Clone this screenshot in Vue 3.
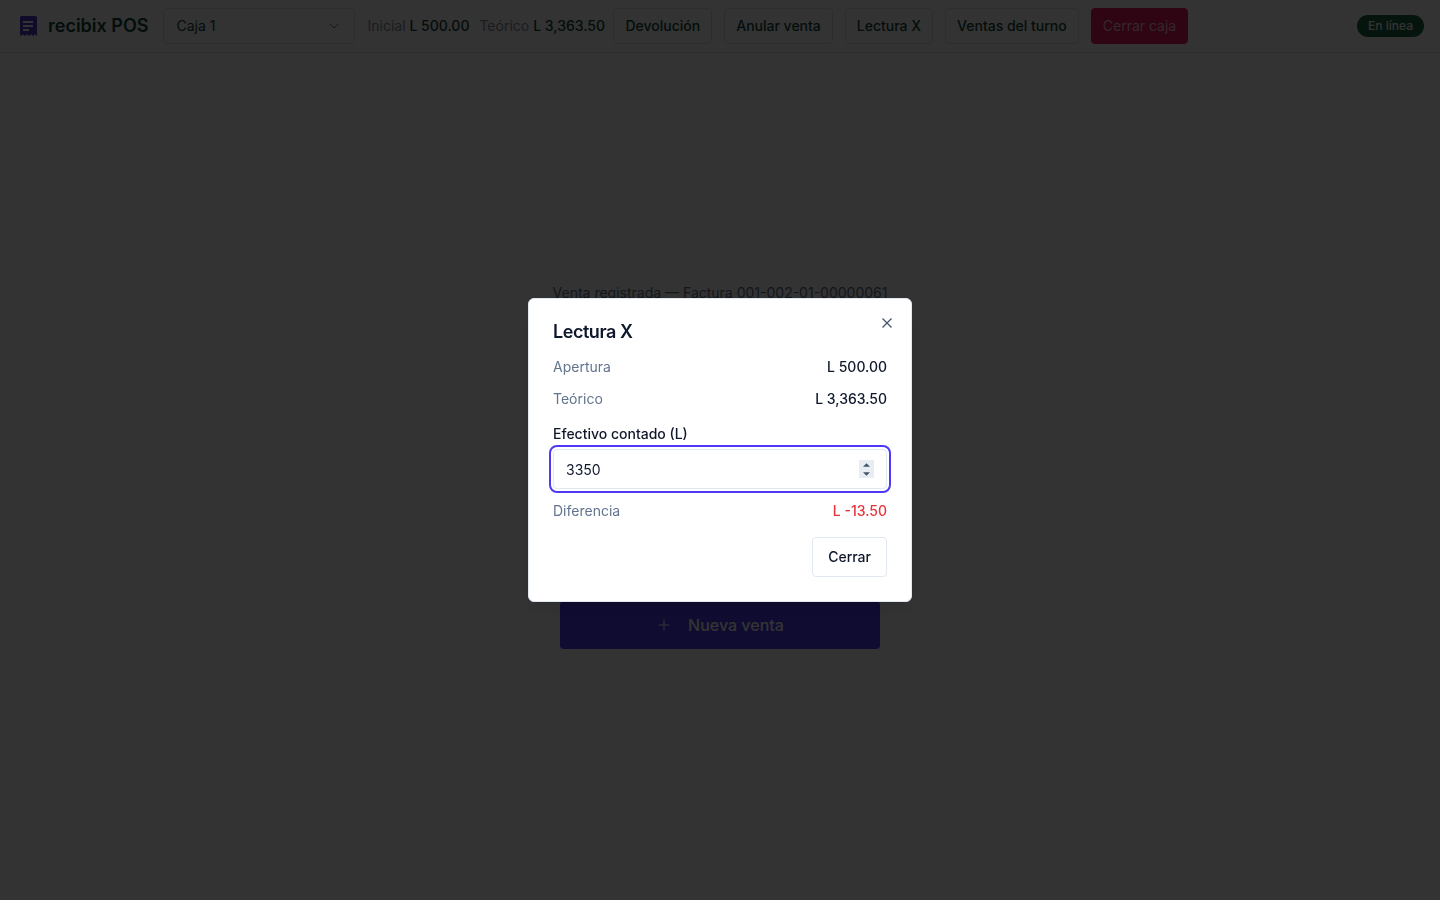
<script setup>
import { ref, computed } from 'vue'

const register = ref('Caja 1')
const counted = ref(3350)
const opening = 500
const expected = 3363.5
const actions = ['Devolución', 'Anular venta', 'Lectura X', 'Ventas del turno']

const money = (n) =>
  'L ' + n.toLocaleString('en-US', { minimumFractionDigits: 2, maximumFractionDigits: 2 })
const difference = computed(() => Number(counted.value) - expected)

const step = (by) => {
  counted.value = Number(counted.value) + by
}
</script>

<template>
  <div class="app">
    <header class="bar">
      <a class="brand" href="#">
        <svg class="logo" viewBox="0 0 24 24" aria-hidden="true">
          <path d="M4 3.5Q4 2 5.500 2h14Q21 2 21 3.500V22l-2-1.800-2 1.800-2-1.800-2 1.800-2-1.800L9 22l-2-1.800L5.500 22 4 20.500z" fill="#4f39c6" />
          <path d="M7 8h10M7 12h10M7 16h6" stroke="#fff" stroke-width="2" />
        </svg>
        <span>recibix POS</span>
      </a>
      <div class="picker">
        <select v-model="register" aria-label="Caja">
          <option>Caja 1</option>
        </select>
        <svg class="chevron" viewBox="0 0 16 16" aria-hidden="true"><path d="M4 6l4 4 4-4" /></svg>
      </div>
      <div class="stats">
        <span>Inicial <b>{{ money(opening) }}</b></span>
        <span>Teórico <b>{{ money(expected) }}</b></span>
      </div>
      <button v-for="a in actions" :key="a" class="action" type="button">{{ a }}</button>
      <button class="action danger" type="button">Cerrar caja</button>
      <span class="status">En línea</span>
    </header>

    <main class="stage">
      <p class="notice">Venta registrada — Factura 001-002-01-00000061</p>
      <button class="new-sale" type="button">
        <svg viewBox="0 0 16 16" aria-hidden="true"><path d="M8 2.500v11M2.500 8h11" /></svg>
        <span>Nueva venta</span>
      </button>
    </main>

    <div class="overlay">
      <section class="dialog" role="dialog" aria-modal="true" aria-labelledby="dialog-title">
        <button class="close" type="button" aria-label="Cerrar">
          <svg viewBox="0 0 16 16"><path d="M3.500 3.500l9 9M12.500 3.500l-9 9" /></svg>
        </button>
        <h2 id="dialog-title">Lectura X</h2>
        <div class="row"><span>Apertura</span><b>{{ money(opening) }}</b></div>
        <div class="row second"><span>Teórico</span><b>{{ money(expected) }}</b></div>
        <label for="counted">Efectivo contado (L)</label>
        <div class="field">
          <input id="counted" v-model="counted" type="number" />
          <div class="spinner">
            <button type="button" aria-label="Aumentar" @click="step(1)"><svg viewBox="0 0 8 4"><path d="M0 4l4-4 4 4z" /></svg></button>
            <button type="button" aria-label="Disminuir" @click="step(-1)"><svg viewBox="0 0 8 4"><path d="M0 0l4 4 4-4z" /></svg></button>
          </div>
        </div>
        <div class="row"><span>Diferencia</span><b class="negative">{{ money(difference) }}</b></div>
        <div class="footer"><button type="button">Cerrar</button></div>
      </section>
    </div>
  </div>
</template>

<style>
body {
  margin: 0;
}
</style>

<style scoped>
.app {
  min-height: 100vh;
  display: flex;
  flex-direction: column;
  background: #fff;
  color: #0f172b;
  font-family: Inter, "Liberation Sans", sans-serif;
  font-size: 14px;
  line-height: 20px;
}
.app *,
.app {
  box-sizing: border-box;
}
button,
select,
input {
  font: inherit;
  color: inherit;
}
b {
  font-weight: 500;
}
.bar {
  display: flex;
  align-items: center;
  gap: 12px;
  padding: 8px 16px;
  border-bottom: 1px solid #e2e2e2;
  color: #0f4638;
  white-space: nowrap;
}
.brand {
  display: flex;
  align-items: center;
  gap: 8px;
  margin-right: 3px;
  color: inherit;
  font-size: 18px;
  line-height: 28px;
  font-weight: 600;
  text-decoration: none;
}
.logo {
  width: 24px;
  height: 24px;
}
.picker {
  position: relative;
  width: 192px;
}
.picker select {
  width: 100%;
  height: 36px;
  padding: 0 12px;
  appearance: none;
  background: transparent;
  border: 1px solid #e2e2e2;
  border-radius: 4px;
}
.chevron {
  position: absolute;
  right: 13px;
  top: 10px;
  width: 16px;
  height: 16px;
  fill: none;
  stroke: #6a7282;
  pointer-events: none;
}
.stats {
  display: flex;
  gap: 10px;
  width: 234px;
  color: #8a8a9e;
}
.stats b {
  color: #0f4638;
}
.action {
  height: 36px;
  padding: 0 11px;
  background: transparent;
  border: 1px solid #e2e2e2;
  border-radius: 4px;
  font-weight: 500;
}
.danger {
  background: #ec1460;
  border-color: #ec1460;
  color: #ffc8d0;
  font-weight: 400;
}
.status {
  margin-left: auto;
  padding: 3px 11px;
  border-radius: 11px;
  background: #1e6446;
  color: #fff;
  font-size: 12px;
  line-height: 16px;
  font-weight: 500;
}
.stage {
  flex: 1;
  display: flex;
  flex-direction: column;
  align-items: center;
  justify-content: center;
  gap: 298px;
  padding-bottom: 22px;
}
.notice {
  margin: 0;
  color: #62748e;
}
.new-sale {
  width: 320px;
  height: 48px;
  display: flex;
  align-items: center;
  justify-content: center;
  gap: 16px;
  border: 0;
  border-radius: 4px;
  background: #503cf5;
  color: #fff;
  font-size: 16px;
  font-weight: 500;
}
.new-sale svg {
  width: 16px;
  height: 16px;
  stroke: #fff;
}
.overlay {
  position: fixed;
  inset: 0;
  display: flex;
  align-items: center;
  justify-content: center;
  background: rgba(0, 0, 0, 0.8);
}
.dialog {
  position: relative;
  width: 384px;
  max-width: 100%;
  padding: 24px;
  background: #fff;
  border: 1px solid #e2e8f0;
  border-radius: 6px;
  box-shadow: 0 10px 15px -3px rgba(0, 0, 0, 0.1), 0 4px 6px -4px rgba(0, 0, 0, 0.1);
}
h2 {
  margin: 0 0 16px;
  font-size: 18px;
  line-height: 18px;
  font-weight: 600;
  letter-spacing: -0.025em;
}
.close {
  position: absolute;
  top: 16px;
  right: 16px;
  width: 16px;
  height: 16px;
  padding: 0;
  border: 0;
  background: none;
}
svg {
  display: block;
}
.close svg {
  stroke: #45556c;
  stroke-width: 1.3;
}
.row {
  display: flex;
  justify-content: space-between;
  color: #62748e;
}
.row b {
  color: #0f172b;
}
.row .negative {
  color: #e7343c;
}
.second {
  margin-top: 12px;
}
label {
  display: block;
  margin-top: 15px;
  font-weight: 500;
}
.field {
  position: relative;
  margin: 5px 0 12px;
}
.field input {
  display: block;
  width: 100%;
  height: 40px;
  padding: 0 12px;
  border: 1px solid #e2e8f0;
  border-radius: 4px;
  background: #fff;
  outline: 2px solid #4f39f6;
  outline-offset: 2px;
  appearance: textfield;
}
.field input::-webkit-inner-spin-button {
  appearance: none;
}
.spinner {
  position: absolute;
  top: 11px;
  right: 13px;
  width: 15px;
  height: 18px;
  display: flex;
  flex-direction: column;
  background: #e8edf3;
}
.spinner button {
  flex: 1;
  display: flex;
  align-items: center;
  justify-content: center;
  padding: 0;
  border: 0;
  background: none;
}
.spinner svg {
  width: 7px;
  height: 4px;
  fill: #45556c;
}
.footer {
  display: flex;
  justify-content: flex-end;
  margin-top: 16px;
}
.footer button {
  height: 40px;
  padding: 0 15px;
  background: #fff;
  border: 1px solid #e2e8f0;
  border-radius: 4px;
  font-weight: 500;
}
</style>
